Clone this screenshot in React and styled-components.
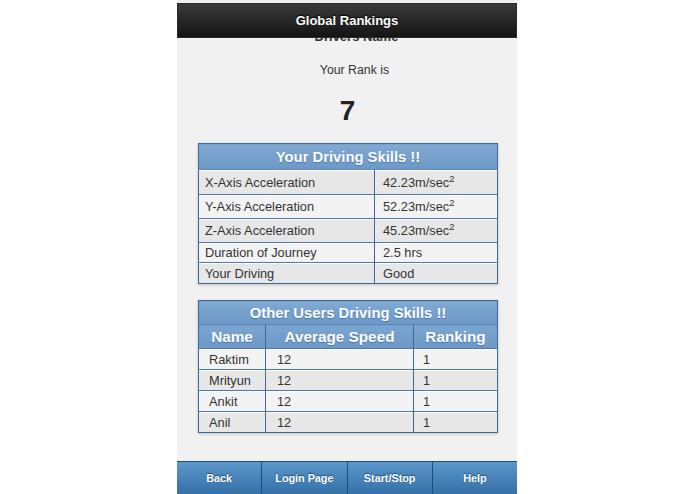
import React from "react";
import styled, { createGlobalStyle } from "styled-components";

const GlobalStyle = createGlobalStyle`
  body {
    margin: 0;
    background: #ffffff;
    font-family: "Liberation Sans", Arial, sans-serif;
  }
`;

const Phone = styled.div`
  width: 340px;
  height: 494px;
  margin: 0 auto;
  position: relative;
  left: -0.5px;
  background: #f1f1f1;
  display: flex;
  flex-direction: column;
  overflow: hidden;
  padding-top: 3px;
  box-sizing: border-box;
`;

const Header = styled.div`
  position: absolute;
  top: 3px;
  left: 0;
  right: 0;
  height: 35px;
  z-index: 2;
  background: linear-gradient(#3a3a3a, #141414);
  border: 1px solid #2a2a2a;
  box-sizing: border-box;
  display: flex;
  align-items: center;
  justify-content: center;
  color: #fff;
  font-size: 13px;
  font-weight: bold;
  text-shadow: 0 -1px 1px #000;
`;

const Content = styled.div`
  flex: 1;
  padding: 24px 20px 0 21px;
  display: flex;
  flex-direction: column;
  align-items: stretch;
`;

const DriverName = styled.div`
  text-align: center;
  padding-left: 18px;
  font-size: 13px;
  line-height: 20px;
  font-weight: bold;
  color: #333;
`;

const RankLabel = styled.div`
  margin-top: 14px;
  padding-left: 14px;
  text-align: center;
  font-size: 12.3px;
  line-height: 18px;
  color: #333;
`;

const RankValue = styled.div`
  margin-top: 15px;
  text-align: center;
  font-size: 28px;
  line-height: 34px;
  font-weight: bold;
  color: #222;
`;

const Table = styled.table`
  width: 300px;
  border-collapse: collapse;
  margin-top: ${(p) => p.$top}px;
  border: 1px solid #3c6a99;
  box-shadow: 0 1px 3px rgba(0, 0, 0, 0.2);
  font-family: "Liberation Sans", Arial, sans-serif;
  font-size: 12.8px;
  color: #333;
`;

const TitleCell = styled.th`
  height: ${(p) => p.$h}px;
  padding: 0;
  background: linear-gradient(#80a9d3, #6d98c7);
  color: #fff;
  font-size: 14.8px;
  font-weight: bold;
  text-shadow: 0 1px 1px #4a77a8;
  border-bottom: 1px solid #5d87b6;
`;

const HeadCell = styled.th`
  height: 23px;
  padding: 0;
  background: linear-gradient(#7ba5d1, #6d98c7);
  color: #fff;
  font-size: 15.3px;
  font-weight: bold;
  text-shadow: 0 1px 1px #4a77a8;
  border-right: 1px solid #3c6a99;
  &:last-child {
    border-right: 0;
  }
`;

const Row = styled.tr`
  background: ${(p) => (p.$odd ? "#e7e7e7" : "#f3f3f3")};
  border-top: 1px solid #4f79a6;
  box-shadow: inset 0 1px 0 #fff;
`;

const Cell = styled.td`
  height: ${(p) => p.$h}px;
  padding: 0 0 0 ${(p) => p.$pad}px;
  width: ${(p) => p.$w}px;
  border-right: 1px solid #3c6a99;
  box-sizing: border-box;
  &:last-child {
    border-right: 0;
  }
  sup {
    font-size: 9.5px;
    line-height: 0;
  }
`;

const Footer = styled.div`
  height: 33px;
  display: flex;
  border-top: 1px solid #1f4c78;
  box-sizing: border-box;
`;

const FooterButton = styled.div`
  flex: 1;
  display: flex;
  align-items: center;
  justify-content: center;
  background: linear-gradient(#5a97cb, #3570a6);
  color: #fff;
  font-size: 10.8px;
  font-weight: bold;
  text-shadow: 0 -1px 1px #1d4a75;
  border-left: 1px solid #1f4c78;
  &:first-child {
    border-left: 0;
  }
`;

const skills = [
  { label: "X-Axis Acceleration", value: "42.23m/sec", sup: true, h: 25 },
  { label: "Y-Axis Acceleration", value: "52.23m/sec", sup: true, h: 24 },
  { label: "Z-Axis Acceleration", value: "45.23m/sec", sup: true, h: 24 },
  { label: "Duration of Journey", value: "2.5 hrs", h: 20 },
  { label: "Your Driving", value: "Good", h: 21 },
];

const users = ["Raktim", "Mrityun", "Ankit", "Anil"];

const buttons = ["Back", "Login Page", "Start/Stop", "Help"];

export default function App() {
  return (
    <>
      <GlobalStyle />
      <Phone>
        <Header>Global Rankings</Header>
        <Content>
          <DriverName>Drivers Name</DriverName>
          <RankLabel>Your Rank is</RankLabel>
          <RankValue>7</RankValue>

          <Table $top={15}>
            <thead>
              <tr>
                <TitleCell colSpan={2} $h={25}>
                  Your Driving Skills !!
                </TitleCell>
              </tr>
            </thead>
            <tbody>
              {skills.map((s, i) => (
                <Row key={s.label} $odd={i % 2 === 0}>
                  <Cell $h={s.h} $pad={6} $w={176}>
                    {s.label}
                  </Cell>
                  <Cell $h={s.h} $pad={8}>
                    {s.value}
                    {s.sup && <sup>2</sup>}
                  </Cell>
                </Row>
              ))}
            </tbody>
          </Table>

          <Table $top={16}>
            <thead>
              <tr>
                <TitleCell colSpan={3} $h={23}>
                  Other Users Driving Skills !!
                </TitleCell>
              </tr>
              <tr>
                <HeadCell>Name</HeadCell>
                <HeadCell>Average Speed</HeadCell>
                <HeadCell>Ranking</HeadCell>
              </tr>
            </thead>
            <tbody>
              {users.map((u, i) => (
                <Row key={u} $odd={i % 2 === 1}>
                  <Cell $h={21} $pad={10} $w={67}>
                    {u}
                  </Cell>
                  <Cell $h={21} $pad={11} $w={148}>
                    12
                  </Cell>
                  <Cell $h={21} $pad={9}>
                    1
                  </Cell>
                </Row>
              ))}
            </tbody>
          </Table>
        </Content>
        <Footer>
          {buttons.map((b) => (
            <FooterButton key={b}>{b}</FooterButton>
          ))}
        </Footer>
      </Phone>
    </>
  );
}
